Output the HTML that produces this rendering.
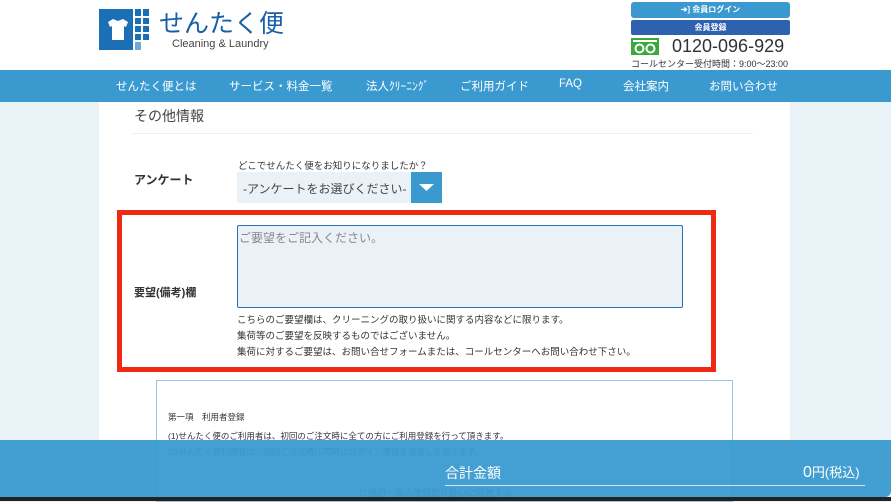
<!DOCTYPE html>
<html><head><meta charset="utf-8"><style>
*{margin:0;padding:0;box-sizing:border-box}
body{width:891px;height:501px;overflow:hidden;background:#e9f2f7;font-family:"Liberation Sans","Noto Sans CJK JP",sans-serif;position:relative;color:#333}
.abs{position:absolute}
header{position:absolute;left:0;top:0;width:891px;height:70px;background:#fff}
nav{position:absolute;left:0;top:70px;width:891px;height:32px;background:#3a9ad0;color:#fff;font-size:11.5px}
nav span{position:absolute;top:8px}
.content{position:absolute;left:99px;top:102px;width:691px;height:340px;background:#fff}
.t{position:absolute;white-space:nowrap}
</style></head><body>
<header>
<svg class="abs" style="left:99px;top:9px" width="52" height="42">
<rect x="0" y="0" width="34" height="41" fill="#1a6fb5"/>
<path d="M9 13 L14 10 L19 12 L24 10 L29 13 L27 18 L25 17 L25 31 L13 31 L13 17 L11 18 Z" fill="#fff"/>
<g fill="#1a6fb5">
<rect x="36" y="0" width="6" height="7"/><rect x="44" y="0" width="6" height="7"/>
<rect x="36" y="9" width="6" height="6"/><rect x="44" y="9" width="6" height="6"/>
<rect x="36" y="17" width="6" height="6"/><rect x="44" y="17" width="6" height="6"/>
<rect x="36" y="25" width="6" height="6"/><rect x="44" y="25" width="6" height="6"/>
<rect x="36" y="33" width="6" height="8" fill="#6fa9d9"/>
</g></svg>
<div class="t" style="left:159px;top:4px;font-size:25px;color:#1a5ea8">せんたく便</div>
<div class="t" style="left:172px;top:38px;font-size:11px;color:#444">Cleaning &amp; Laundry</div>
<div class="abs" style="left:631px;top:2px;width:159px;height:16px;background:#3a9ad0;border-radius:3px;color:#fff;font-size:8px;text-align:center;line-height:16px;font-weight:bold">➜] 会員ログイン</div>
<div class="abs" style="left:631px;top:20px;width:159px;height:15px;background:#2e62b0;border-radius:2px;color:#fff;font-size:8px;text-align:center;line-height:15px;font-weight:bold">会員登録</div>
<svg class="abs" style="left:631px;top:38px" width="28" height="17"><rect width="28" height="17" fill="#3aa83a"/><rect x="2" y="2" width="24" height="2" fill="#fff"/><circle cx="8.5" cy="10.5" r="4" stroke="#fff" stroke-width="2" fill="none"/><circle cx="19.5" cy="10.5" r="4" stroke="#fff" stroke-width="2" fill="none"/></svg>
<div class="t" style="left:672px;top:36px;font-size:18px;color:#333">0120-096-929</div>
<div class="t" style="left:631px;top:57px;font-size:9px;color:#333">コールセンター受付時間：9:00〜23:00</div>
</header>
<nav>
<span style="left:116px">せんたく便とは</span>
<span style="left:229px">サービス・料金一覧</span>
<span style="left:366px">法人ｸﾘｰﾆﾝｸﾞ</span>
<span style="left:460px">ご利用ガイド</span>
<span style="left:559px">FAQ</span>
<span style="left:623px">会社案内</span>
<span style="left:709px">お問い合わせ</span>
</nav>
<div class="content"></div>
<div class="t" style="left:134px;top:106px;font-size:14px;color:#444">その他情報</div>
<div class="abs" style="left:132px;top:133px;width:621px;height:1px;background:#eef0f2"></div>
<div class="t" style="left:134px;top:171px;font-size:12px;font-weight:bold">アンケート</div>
<div class="t" style="left:238px;top:158px;font-size:9.5px">どこでせんたく便をお知りになりましたか？</div>
<div class="abs" style="left:237px;top:172px;width:175px;height:31px;background:#eaf2f7"></div>
<div class="t" style="left:243px;top:180px;font-size:12px;color:#444">-アンケートをお選びください-</div>
<div class="abs" style="left:411px;top:172px;width:31px;height:31px;background:#3a9ad0"></div>
<svg class="abs" style="left:419px;top:184px" width="15" height="8"><path d="M0 0 L15 0 L7.5 7Z" fill="#fff"/></svg>
<div class="abs" style="left:117px;top:210px;width:599px;height:162px;border:5px solid #ee2a12"></div>
<div class="abs" style="left:237px;top:225px;width:446px;height:83px;background:#eaf2f7;border:1.5px solid #2d70b8;border-radius:2px"></div>
<div class="t" style="left:239px;top:229px;font-size:12px;color:#888">ご要望をご記入ください。</div>
<div class="t" style="left:134px;top:284px;font-size:11px;font-weight:bold">要望(備考)欄</div>
<div class="t" style="left:237px;top:313px;font-size:9.5px;line-height:16px">こちらのご要望欄は、クリーニングの取り扱いに関する内容などに限ります。<br>集荷等のご要望を反映するものではございません。<br>集荷に対するご要望は、お問い合せフォームまたは、コールセンターへお問い合わせ下さい。</div>
<div class="abs" style="left:156px;top:380px;width:577px;height:122px;border:1px solid #9fc4de;background:#fff"></div>
<div class="t" style="left:168px;top:411px;font-size:8.5px">第一項　利用者登録</div>
<div class="t" style="left:168px;top:430px;font-size:8.5px">(1)せんたく便のご利用者は、初回のご注文時に全ての方にご利用登録を行って頂きます。</div>
<div class="t" style="left:168px;top:446px;font-size:8.5px">(2)せんたく便利用者は、初回ご注文時に同時にログイン情報を保存して頂きます。</div>
<div class="t" style="left:360px;top:486px;font-size:9px">□ 規約・個人情報取り扱いに同意する</div>
<div class="abs" style="left:0;top:440px;width:891px;height:57px;background:rgba(58,154,208,0.95);border-radius:0 0 6px 0"></div>
<div class="abs" style="left:0;top:497px;width:891px;height:4px;background:#222"></div>
<div class="t" style="left:445px;top:463px;font-size:14px;color:#fff">合計金額</div>
<div class="abs" style="left:445px;top:485px;width:420px;height:1px;background:#cfe8f5"></div>
<div class="t" style="left:803px;top:462px;font-size:16px;color:#fff">0<span style="font-size:13px">円(税込)</span></div>
</body></html>
